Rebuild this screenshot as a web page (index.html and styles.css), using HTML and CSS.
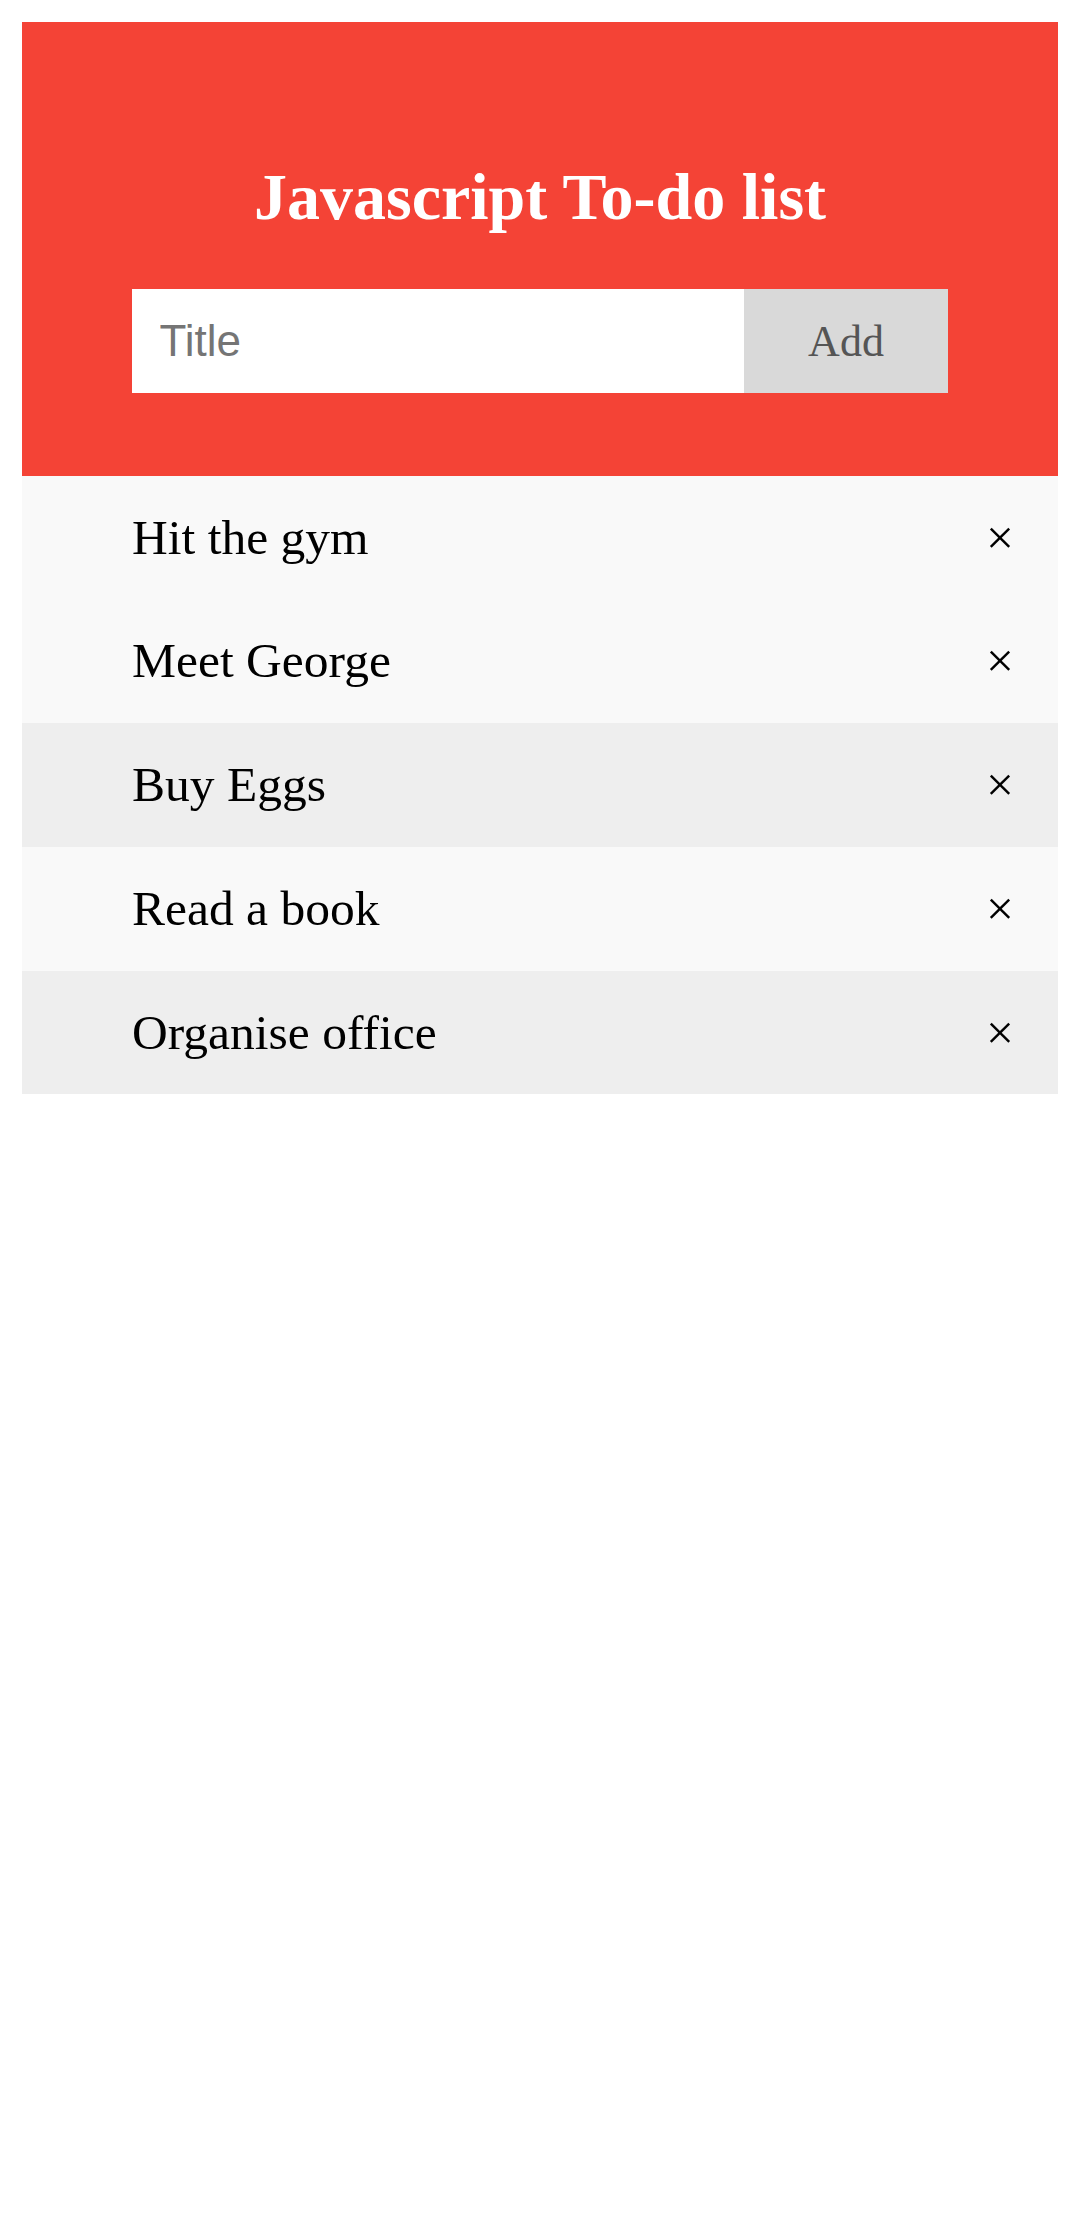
FILE: index.html
```html
<!DOCTYPE html>
<html lang="en">
<head>
<meta charset="utf-8">
<title>Javascript To-do list</title>
<link rel="stylesheet" href="styles.css">
</head>
<body>
  <div class="header">
    <h2 class="title">Javascript To-do list</h2>
    <div class="entry">
      <input class="entry-input" type="text" placeholder="Title">
      <span class="add-btn">Add</span>
    </div>
  </div>
  <ul class="todo-list">
    <li class="todo light"><span class="todo-text">Hit the gym</span><span class="close">&#215;</span></li>
    <li class="todo light"><span class="todo-text">Meet George</span><span class="close">&#215;</span></li>
    <li class="todo dark"><span class="todo-text">Buy Eggs</span><span class="close">&#215;</span></li>
    <li class="todo light"><span class="todo-text">Read a book</span><span class="close">&#215;</span></li>
    <li class="todo dark"><span class="todo-text">Organise office</span><span class="close">&#215;</span></li>
  </ul>
</body>
</html>
```

FILE: styles.css
```css
html, body {
  background: #ffffff;
}

body {
  margin: 22px;
  font-family: "Liberation Serif", "Times New Roman", serif;
  color: #000000;
}

.header {
  background-color: #f44336;
  padding: 82.5px 110px;
  color: #ffffff;
  text-align: center;
}

.title {
  margin: 54.5px 0;
  font-size: 66px;
  line-height: 75.5px;
  font-weight: bold;
}

.entry {
  display: flex;
  height: 104px;
}

.entry-input {
  box-sizing: border-box;
  width: 75%;
  height: 104px;
  margin: 0;
  border: none;
  border-radius: 0;
  padding: 0 27.5px;
  font-family: "Liberation Sans", Arial, sans-serif;
  font-size: 44px;
  color: #000000;
  background: #ffffff;
  outline: none;
}

.entry-input::placeholder {
  color: #757575;
}

.add-btn {
  box-sizing: border-box;
  width: 25%;
  height: 104px;
  display: flex;
  align-items: center;
  justify-content: center;
  background: #d9d9d9;
  color: #555555;
  font-family: "Liberation Serif", "Times New Roman", serif;
  font-size: 44px;
  cursor: pointer;
}

.todo-list {
  margin: 0;
  padding: 0;
  list-style: none;
}

.todo {
  display: flex;
  align-items: center;
  justify-content: space-between;
  padding: 33px 0 33px 110px;
  font-size: 49.5px;
  line-height: 57.75px;
  cursor: pointer;
}

.light {
  background: #f9f9f9;
}

.dark {
  background: #eeeeee;
}

.close {
  padding: 0 44px;
  font-size: 49.5px;
}
```
